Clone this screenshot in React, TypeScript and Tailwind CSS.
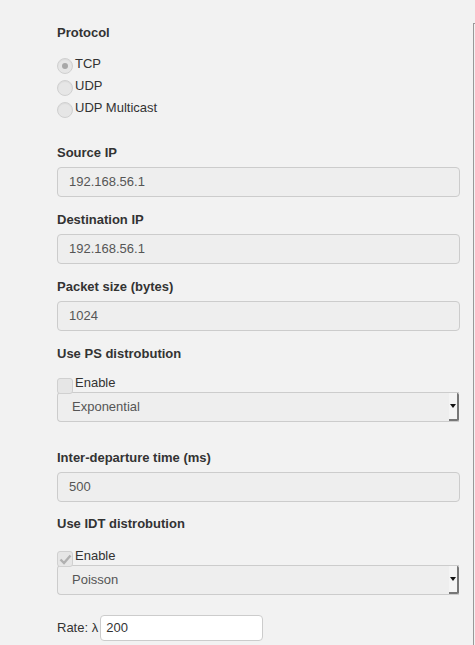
const font = { fontFamily: '"Liberation Sans", Arial, sans-serif' };

function Label({ children }: { children: React.ReactNode }) {
  return <div className="h-5 leading-5 text-[13px] font-bold text-[#333]">{children}</div>;
}

function TextBox({ value }: { value: string }) {
  return (
    <div className="mt-1 h-[30px] w-[403px] rounded-[4px] border border-[#ccc] bg-[#eee] pl-[11px] text-[13px] leading-[28px] text-[#555]">
      {value}
    </div>
  );
}

function Radio({ label, checked }: { label: string; checked?: boolean }) {
  return (
    <div className="flex h-[22px] items-start">
      <span className="flex h-4 w-4 items-center justify-center rounded-full border border-[#d0d0d0] bg-[#e6e6e6] shadow-[inset_0_1px_1px_rgba(0,0,0,0.05)]">
        {checked && <span className="h-[6px] w-[6px] rounded-full bg-[#a8a8a8]" />}
      </span>
      <span className="ml-[2px] text-[13px] leading-[11px] text-[#333]">{label}</span>
    </div>
  );
}

function Check({ checked }: { checked?: boolean }) {
  return (
    <div className="flex h-[14px] items-start">
      <span className="relative z-10 flex h-4 w-4 items-center justify-center rounded-[3px] border border-[#d0d0d0] bg-[#e6e6e6]">
        {checked && (
          <svg width="13" height="11" viewBox="0 0 13 11">
            <path d="M1.5 5.5 L5 9 L11.5 1.5" fill="none" stroke="#b0b0b0" strokeWidth="2.4" />
          </svg>
        )}
      </span>
      <span className="ml-[2px] text-[13px] leading-[9px] text-[#333]">Enable</span>
    </div>
  );
}

function SelectBox({ value }: { value: string }) {
  return (
    <div className="flex h-[30px] w-[402px] items-stretch rounded-l-[4px] border-y border-l border-[#ccc] bg-[#eee]">
      <div className="flex-1 pl-[14px] text-[13px] leading-[28px] text-[#555]">{value}</div>
      <div className="flex w-[10px] items-center justify-center rounded-r-[2px] border-r-2 border-b-2 border-[#777] bg-[#f4f4f4]">
        <svg width="6" height="4" viewBox="0 0 6 4">
          <path d="M0 0 H6 L3 4 Z" fill="#111" />
        </svg>
      </div>
    </div>
  );
}

export default function App() {
  return (
    <div className="flex h-[645px] w-[475px] overflow-hidden bg-[#f2f2f2]" style={font}>
      <div className="w-[473px] pl-[57px] pt-[23px]">
        <Label>Protocol</Label>
        <div className="mt-[15px]">
          <Radio label="TCP" checked />
          <Radio label="UDP" />
          <Radio label="UDP Multicast" />
        </div>

        <div className="mt-[19px]">
          <Label>Source IP</Label>
          <TextBox value="192.168.56.1" />
        </div>
        <div className="mt-[13px]">
          <Label>Destination IP</Label>
          <TextBox value="192.168.56.1" />
        </div>
        <div className="mt-[13px]">
          <Label>Packet size (bytes)</Label>
          <TextBox value="1024" />
        </div>

        <div className="mt-[13px]">
          <Label>Use PS distrobution</Label>
          <div className="mt-[14px]">
            <Check />
          </div>
          <SelectBox value="Exponential" />
        </div>

        <div className="mt-[26px]">
          <Label>Inter-departure time (ms)</Label>
          <TextBox value="500" />
        </div>

        <div className="mt-[12px]">
          <Label>Use IDT distrobution</Label>
          <div className="mt-[17px]">
            <Check checked />
          </div>
          <SelectBox value="Poisson" />
        </div>

        <div className="mt-[20px] flex items-center">
          <span className="text-[13px] text-[#333]">Rate: λ</span>
          <div className="ml-[2px] h-[26px] w-[163px] rounded-[4px] border border-[#ccc] bg-white pl-[5px] text-[13px] leading-[24px] text-[#333]">
            200
          </div>
        </div>
      </div>
      <div className="mt-[23px] h-full w-[2px] border-l border-t border-[#999]" />
    </div>
  );
}
